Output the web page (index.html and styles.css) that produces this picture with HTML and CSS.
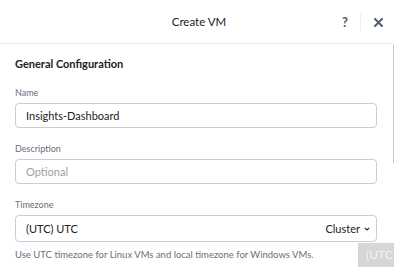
FILE: index.html
```html
<!DOCTYPE html>
<html lang="en">
  <head>
    <meta charset="UTF-8" />
    <title>Create VM</title>
    <link rel="stylesheet" href="styles.css">
  </head>
  <body>
    <div class="modal">
      <!-- Header -->
      <div class="modal-header">
        <span class="modal-title">Create VM</span>
        <div class="header-actions">
          <span class="help-btn">?</span>
          <span class="divider"></span>
          <span class="close-btn">
            <svg width="9" height="9" viewBox="0 0 9 9"><path d="M1 1L8 8M8 1L1 8" stroke="#4f5d73" stroke-width="2" stroke-linecap="round"/></svg>
          </span>
        </div>
      </div>

      <!-- Body -->
      <div class="modal-body">
        <h2 class="section-title">General Configuration</h2>

        <div class="field">
          <label>Name</label>
          <div class="input">Insights-Dashboard</div>
        </div>

        <div class="field">
          <label>Description</label>
          <div class="input placeholder">Optional</div>
        </div>

        <div class="field">
          <label>Timezone</label>
          <div class="input select">
            <span>(UTC) UTC</span>
            <span class="select-value">Cluster
              <svg width="6" height="4" viewBox="0 0 6 4"><path d="M0.8 0.8L3 3L5.2 0.8" fill="none" stroke="#222" stroke-width="1.1"/></svg>
            </span>
          </div>
          <p class="help">Use UTC timezone for Linux VMs and local timezone for Windows VMs.</p>
        </div>
      </div>

      <div class="scrollbar"></div>
      <div class="tz-tip">(UTC</div>
    </div>
  </body>
</html>
```

FILE: styles.css
```css
/* General Styles */
body {
  margin: 0;
  padding: 0;
  font-family: "Lato", "Liberation Sans", sans-serif;
  background: #fff;
  color: #222;
}

.modal {
  position: relative;
  width: 394px;
  height: 276px;
  overflow: hidden;
}

.modal-header {
  height: 43px;
  border-bottom: 1px solid #ececef;
  display: flex;
  align-items: center;
  justify-content: center;
  position: relative;
}

.modal-title {
  font-size: 11.5px;
  color: #222;
  padding-left: 4px;
}

.header-actions {
  position: absolute;
  right: 11px;
  top: 0;
  height: 43px;
  display: flex;
  align-items: center;
}

.help-btn {
  font-size: 13px;
  font-weight: 700;
  color: #4f5d73;
  width: 16px;
  text-align: center;
}

.divider {
  width: 1px;
  height: 18px;
  background: #eceef1;
  margin: 0 13px 0 7px;
}

.close-btn {
  display: flex;
  align-items: center;
  padding-top: 2px;
}

.modal-body {
  padding: 13px 17px 0 15px;
}

.section-title {
  font-size: 11px;
  font-weight: 700;
  margin: 0 0 17px;
  color: #222;
}

.field {
  margin-bottom: 15px;
}

.field label {
  display: block;
  font-size: 9px;
  color: #6b6f78;
  margin-bottom: 5px;
}

.input {
  height: 23px;
  border: 1px solid #c9cdd4;
  border-radius: 4px;
  padding: 0 10px;
  display: flex;
  align-items: center;
  font-size: 11px;
  color: #222;
}

.placeholder {
  color: #9aa0a8;
}

.select {
  justify-content: space-between;
  height: 25px;
}

.select-value {
  display: flex;
  align-items: center;
  gap: 4px;
  margin-right: -4px;
}

.help {
  font-size: 9.5px;
  color: #6b6f78;
  margin: 7px 0 0;
}

.scrollbar {
  position: absolute;
  right: 0;
  top: 45px;
  width: 1px;
  height: 118px;
  background: #c3c5ca;
}

.tz-tip {
  position: absolute;
  left: 358px;
  top: 243px;
  width: 40px;
  height: 24px;
  background: #d6d6d6;
  color: #f4f4f4;
  font-size: 12px;
  line-height: 24px;
  padding-left: 8px;
}
```
